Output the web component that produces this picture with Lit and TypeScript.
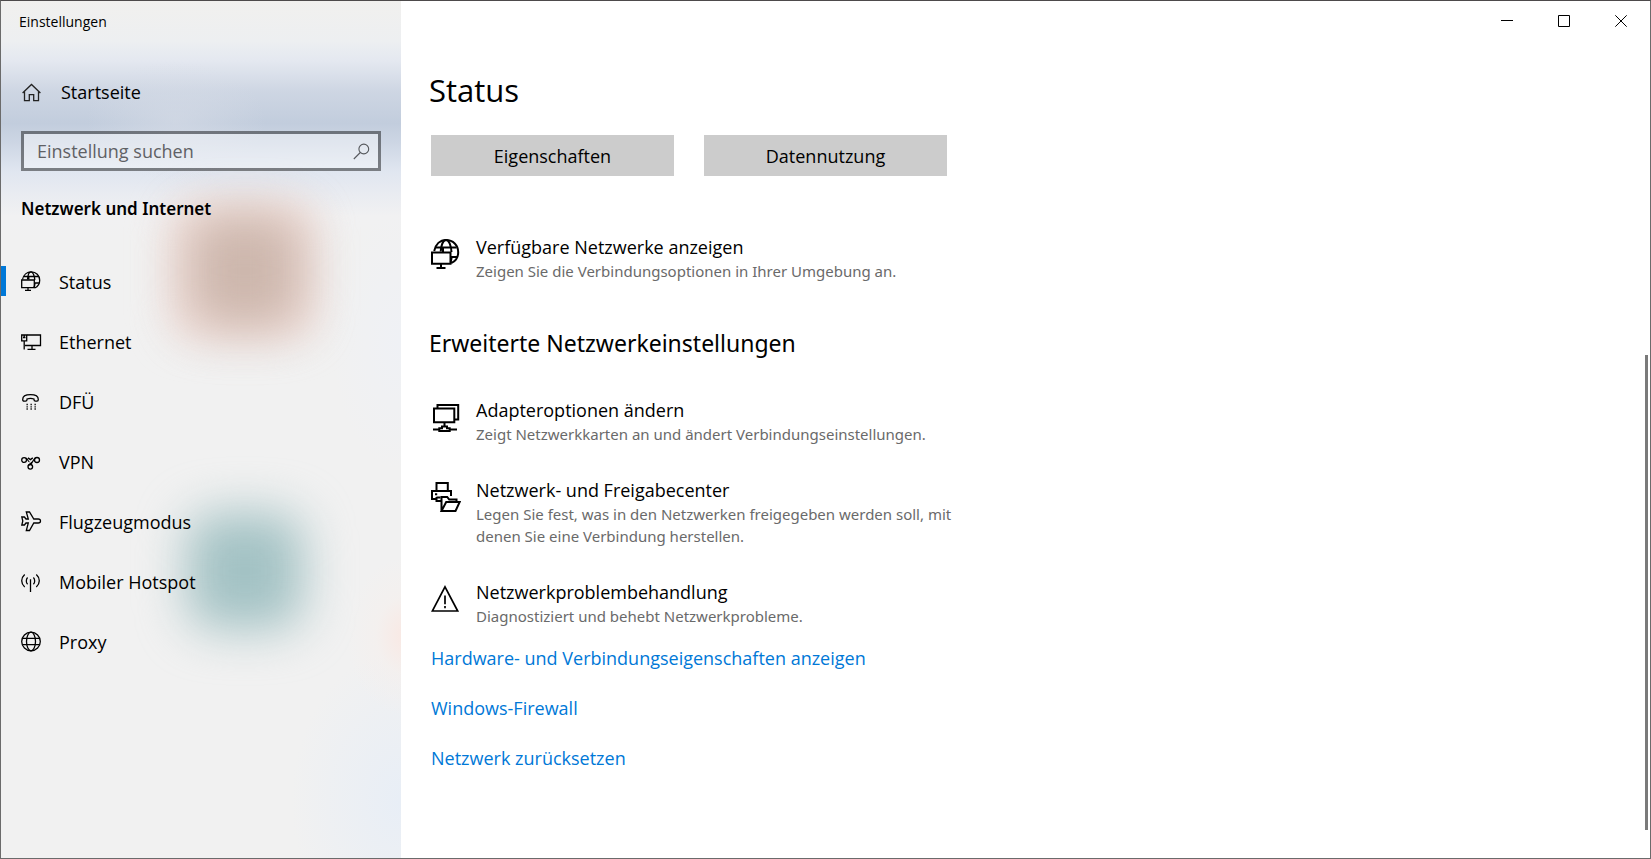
import { LitElement, html, svg, css, TemplateResult } from "lit";
import { customElement, state } from "lit/decorators.js";
import { classMap } from "lit/directives/class-map.js";

const navIcons: Record<string, TemplateResult> = {
  status: svg`
    <path d="M1.5 8.5C2.4 3.8 6 .8 10.3.8c4.7 0 8.4 3.7 8.4 8.4 0 4-2.4 6.6-5 7.8"/>
    <path d="M6.5 8.5C6.8 4.500 8.200.8 10 .8s3.600 3.800 3.800 8.200M3 5.500h15M14 12h4.300M7.800 5v3.500M14 12c-.1 2-.5 3.500-1.200 4.800"/>
    <path d="M.7 9h12.600v7.700H.7zM7 16.700v2.500M4 19.300h6"/>`,
  ethernet: svg`
    <path d="M6 4h13.500v10.500H4M11 14.500V18M6.500 18.300h8"/>
    <path d="M.7 4h5v5.800h-5zM2 6.500h2.500M3.200 4v2.500M3.200 10v8.500"/>`,
  dialup: svg`
    <path d="M1.700 8.500C1.700 5 5 3.700 9.500 3.700s7.800 1.300 7.800 4.800c0 1.300-.5 1.600-1.300 1.600h-1.500c-1 0-1.500-.4-1.500-1.300V8C11 7.200 8 7.200 6 8v.8c0 .9-.5 1.300-1.500 1.300H3c-.8 0-1.300-.3-1.300-1.600z"/>
    <path stroke-width="1.300" stroke-dasharray="1.300 2.700" d="M5.500 13.500h10M5.500 15.800h10M5.500 18h10"/>`,
  vpn: svg`
    <circle cx="3.100" cy="9" r="2.400"/><circle cx="9.300" cy="15.800" r="2.300"/><circle cx="16" cy="9" r="2.500"/>
    <path d="M4.600 7.200c1.600-.6 2.400 3.600 3.900 3.600M7 6.900l2.400 1.700 2.400-1.700M14.500 7c-2.200 1.200-3 4.800-4.900 6.500M7.200 15c.8-2 2.800-2.300 3.700-4"/>`,
  plane: svg`
    <path d="M5.300 1h3.200l4.300 7h4.400c1.500 0 2.300.9 2.300 2s-.8 2-2.300 2h-4.400l-4.300 7.500H5.300L7.300 12H5l-1.600 2H.8l1-4-1-4h2.600L5 8h2.300z"/>`,
  hotspot: svg`
    <path d="M9.500 8.200V21M6.600 6.500c-1.700 1.800-1.700 5 0 6.800M3.700 3.500c-4 3.600-4 9 0 12.600M12.400 6.500c1.700 1.800 1.700 5 0 6.800M15.300 3.500c4 3.600 4 9 0 12.600"/>`,
  globe: svg`
    <circle cx="10" cy="10.500" r="9.300"/><ellipse cx="10" cy="10.500" rx="4.500" ry="9.300"/>
    <path d="M1.500 7.300h17M1.500 13.700h17"/>`,
};

const itemIcons: Record<string, TemplateResult> = {
  network: svg`
    <path d="M3.200 12C4.600 5.500 9 1 15 1c7 0 12.200 5.200 12.200 12.200 0 5.500-3 9.200-7 11"/>
    <path d="M9.700 12.500C10 6.500 12 1 15 1s5.200 5.500 5.500 12M5 8.500h20.500M20 18h6.500M12 8v5M20.700 17c-.1 2-.3 4-1 6"/>
    <path d="M1 13.500h18.500v11.300H1zM10 25v3.800M5.500 29h9"/>`,
  adapter: svg`
    <path d="M3 6.500h20.300v13.800H3zM6.500 6V3h20.700v14.500h-3.500M13.500 20.500v4"/>
    <path d="M2 27.500h6M18.500 27.500H26M8.300 26.300h2.700v-1.800h5v1.800h2.700V29H8.300z"/>`,
  sharing: svg`
    <path d="M5.500 9V1h11.300v8M5 17H1V9h19v5"/>
    <path d="M4 12.300h2.200M5.500 15.500h4M5.500 15v4H10"/>
    <path d="M10.500 29V15h5.700l2 2.500h7.300V20M10.500 29l4.700-9h13.500L24.500 29z"/>`,
  warning: svg`<path stroke-width="1.700" d="M14 2.800L26.700 27H1.300zM14 11.500v8.800M14 22v2.300"/>`,
};

interface Entry { icon: string; label: string; text?: string }

const navEntries: Entry[] = [
  { icon: "status", label: "Status" },
  { icon: "ethernet", label: "Ethernet" },
  { icon: "dialup", label: "DFÜ" },
  { icon: "vpn", label: "VPN" },
  { icon: "plane", label: "Flugzeugmodus" },
  { icon: "hotspot", label: "Mobiler Hotspot" },
  { icon: "globe", label: "Proxy" },
];

const advanced: Entry[] = [
  { icon: "adapter", label: "Adapteroptionen ändern", text: "Zeigt Netzwerkkarten an und ändert Verbindungseinstellungen." },
  { icon: "sharing", label: "Netzwerk- und Freigabecenter", text: "Legen Sie fest, was in den Netzwerken freigegeben werden soll, mit denen Sie eine Verbindung herstellen." },
  { icon: "warning", label: "Netzwerkproblembehandlung", text: "Diagnostiziert und behebt Netzwerkprobleme." },
];

const links = ["Hardware- und Verbindungseigenschaften anzeigen", "Windows-Firewall", "Netzwerk zurücksetzen"];

@customElement("settings-sidebar")
class SettingsSidebar extends LitElement {
  @state() private active = "Status";

  static styles = css`
    :host {
      display: block; position: relative; isolation: isolate; overflow: hidden;
      background:
        radial-gradient(ellipse 60px 80px at 405px 635px, #f9e8e3 0%, #f6efec80 50%, #f4f0ee00 100%),
        radial-gradient(ellipse 110px 150px at 400px 800px, #e8eef6 0%, #f0f1f300 100%),
        radial-gradient(ellipse 70px 130px at 400px 340px, #eff1f5 0%, #f1f1f100 100%),
        radial-gradient(ellipse 90px 60px at 175px 120px, #d9dee888 0%, #d9dee800 100%),
        linear-gradient(180deg, #f1f0ee 0, #edeff1 40px, #e4e8f0 60px, #ced6e3 90px, #c2cddd 122px, #cdd6e4 142px, #e0e6f0 170px, #e8ebf1 190px, #f1f1f2 215px, #f1f1f1 240px);
    }
    /* Acrylic glow: colour patches of the desktop shining through the pane */
    .glow { position: absolute; z-index: -1; left: 186px; width: 116px; height: 116px; border-radius: 28px; }
    .halo { top: 200px; left: 166px; width: 150px; height: 140px; background: #f3e2de; filter: blur(18px); }
    .red { top: 212px; background: #cdb7ad; filter: blur(24px); }
    .teal { top: 512px; background: #a3c2c4; filter: blur(24px); }
    .title { height: 40px; padding-left: 18px; font-size: 14px; line-height: 41px; }
    .home { display: flex; align-items: center; height: 40px; margin-top: 31px; padding-left: 21px; color: #000; text-decoration: none; }
    .home svg { width: 19px; height: 19px; margin-right: 20px; color: #222; }
    .search {
      display: flex; align-items: center; box-sizing: border-box; height: 40px; margin: 19px 20px 0;
      border: 3px solid #00000073; background: #ffffff66; background-clip: padding-box;
    }
    .search input {
      flex: 1; min-width: 0; border: 0; outline: 0; padding: 0 0 0 13px; background: none; font: inherit; color: #000;
    }
    .search input::placeholder { color: #5f6165; opacity: 1; }
    .find { display: flex; border: 0; padding: 0 8px; background: none; color: #55585c; }
    .find svg { width: 17px; height: 17px; stroke-width: 1.1; }
    h2 { margin: 26px 20px 30px; font: 600 17px/24px "Noto Sans", "Open Sans", sans-serif; }
    .entry {
      display: flex; align-items: center; height: 60px; padding: 0 15px; border: 0;
      color: #000; text-decoration: none;
    }
    .entry::before { content: ""; width: 5px; height: 30px; margin-left: -15px; margin-right: 15px; }
    .entry.active::before { background: #0078d7; }
    .entry svg { width: 20px; height: 20px; margin-right: 18px; }
    .entry span { padding-top: 2px; }
    svg { fill: none; stroke: currentColor; stroke-width: 1.3; overflow: visible; flex: none; }
  `;

  render() {
    return html`
      <div class="glow halo"></div><div class="glow red"></div><div class="glow teal"></div>
      <div class="title">Einstellungen</div>
      <a class="home" href="#startseite">
        <svg viewBox="0 0 19 19" aria-hidden="true"><path d="M.6 10L9.500 1.500l8.900 8.500M2.500 8.700v9h4.800v-6h4.400v6h4.800v-9"/></svg>
        <span>Startseite</span>
      </a>
      <div class="search">
        <input type="text" placeholder="Einstellung suchen" aria-label="Einstellung suchen" />
        <button class="find" aria-label="Suchen">
          <svg viewBox="0 0 17 17"><circle cx="10.800" cy="6" r="4.900"/><path d="M7.300 9.500L.8 16"/></svg>
        </button>
      </div>
      <h2>Netzwerk und Internet</h2>
      <nav>
        ${navEntries.map((e) => html`
          <a class=${classMap({ entry: true, active: e.label === this.active })} href="#${e.icon}"
             @click=${() => (this.active = e.label)}>
            <svg viewBox="0 0 20 20" aria-hidden="true">${navIcons[e.icon]}</svg>
            <span>${e.label}</span>
          </a>`)}
      </nav>
    `;
  }
}

@customElement("app-root")
class AppRoot extends LitElement {
  static styles = css`
    :host {
      display: grid; grid-template-columns: 400px minmax(0, 1fr); box-sizing: border-box; min-height: 100vh;
      border: 1px solid #6b6b6b; border-top-color: #4d4a4b; background: #fff; color: #000;
      font: 18px/24px "Open Sans", "Noto Sans", sans-serif;
    }
    .page { display: grid; grid-template-rows: 40px 1fr; grid-template-columns: minmax(0, 1fr) 5px; }
    .controls { grid-column: 1 / -1; display: flex; justify-content: flex-end; padding-right: 1px; }
    .controls button { width: 57px; border: 0; padding: 0; background: none; color: #000; display: grid; place-items: center; }
    .controls svg { width: 12px; height: 12px; fill: none; stroke: currentColor; stroke-width: 1; display: block; }
    main { padding: 29px 30px 40px 28px; max-width: 547px; }
    h1 { margin: 0 0 25px; font-size: 31px; line-height: 40px; font-weight: 400; }
    h2 { margin: 45px 0 39px; font: 400 23px/32px "Noto Sans", "Open Sans", sans-serif; }
    .actions, .item, .links { margin-left: 2px; }
    .actions { display: grid; grid-template-columns: 243px 243px; gap: 30px; margin-bottom: 59px; }
    .actions button { height: 41px; border: 0; background: #ccc; color: #000; font: inherit; }
    .items { display: grid; gap: 33px; }
    .item { display: flex; color: #000; text-decoration: none; }
    .item svg { flex: none; width: 30px; height: 30px; margin: 4px 15px 0 0; fill: none; stroke: currentColor; stroke-width: 2; }
    .item strong { display: block; font-weight: 400; line-height: 25px; }
    .item small { display: block; font: 15px/22px "Noto Sans", "Open Sans", sans-serif; color: #6a6a6a; }
    .links { display: grid; gap: 26px; justify-items: start; margin-top: 19px; }
    .links a { color: #0078d7; text-decoration: none; }
    .track { display: flex; flex-direction: column; justify-content: flex-end; padding-bottom: 28px; }
    .thumb { width: 3px; height: 475px; background: #7a7a7a; }
  `;

  private item(e: Entry) {
    return html`
      <a class="item" href="#${e.icon}">
        <svg viewBox="0 0 30 30" aria-hidden="true">${itemIcons[e.icon]}</svg>
        <span><strong>${e.label}</strong><small>${e.text}</small></span>
      </a>`;
  }

  render() {
    return html`
      <settings-sidebar></settings-sidebar>
      <div class="page">
        <div class="controls">
          <button aria-label="Minimieren"><svg viewBox="0 0 12 12"><path d="M0 5.500h12"/></svg></button>
          <button aria-label="Maximieren"><svg viewBox="0 0 12 12"><path d="M.5.5h11v11H.5z"/></svg></button>
          <button aria-label="Schließen"><svg viewBox="0 0 12 12"><path d="M.3.3l11.400 11.400M11.700.3L.3 11.700"/></svg></button>
        </div>
        <main>
          <h1>Status</h1>
          <div class="actions"><button>Eigenschaften</button><button>Datennutzung</button></div>
          ${this.item({ icon: "network", label: "Verfügbare Netzwerke anzeigen", text: "Zeigen Sie die Verbindungsoptionen in Ihrer Umgebung an." })}
          <h2>Erweiterte Netzwerkeinstellungen</h2>
          <div class="items">${advanced.map((e) => this.item(e))}</div>
          <div class="links">${links.map((l) => html`<a href="#">${l}</a>`)}</div>
        </main>
        <div class="track"><div class="thumb"></div></div>
      </div>
    `;
  }
}
